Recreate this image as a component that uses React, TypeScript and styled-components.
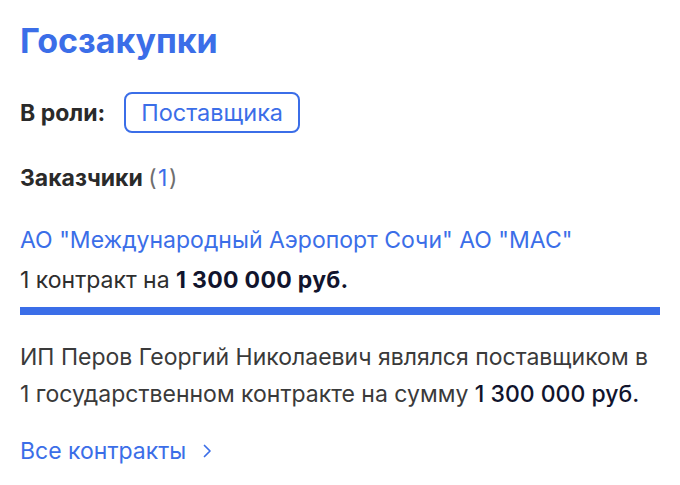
import React from "react";
import styled, { createGlobalStyle } from "styled-components";

const Global = createGlobalStyle`
  html, body { margin: 0; padding: 0; background: #ffffff; }
  body { font-family: Inter, "Noto Sans", sans-serif; -webkit-font-smoothing: antialiased; }
`;

const BLUE = "#3b6ee8";

const Page = styled.div`
  width: 680px;
  height: 485px;
  box-sizing: border-box;
  padding: 19px 20px 0 20px;
  display: flex;
  flex-direction: column;
  color: #2a2a2a;
`;

const Title = styled.h1`
  margin: 0;
  font-size: 34px;
  line-height: 44px;
  font-weight: 700;
  color: ${BLUE};
`;

const RoleRow = styled.div`
  margin-top: 29px;
  display: flex;
  align-items: center;
  gap: 19px;
`;

const Label = styled.span`
  font-size: 23px;
  font-weight: 700;
  color: #2a2a2a;
`;

const RoleButton = styled.button`
  box-sizing: border-box;
  height: 41px;
  padding: 0 15px;
  border: 2px solid ${BLUE};
  border-radius: 8px;
  background: #fff;
  color: ${BLUE};
  font-family: inherit;
  font-size: 23.5px;
  font-weight: 400;
`;

const SectionHead = styled.div`
  margin-top: 30px;
  font-size: 23px;
  font-weight: 700;
  line-height: 30px;
`;

const Count = styled.span`
  font-weight: 400;
  color: #6f6f6f;
  letter-spacing: 1.5px;
  span { color: ${BLUE}; }
`;

const CustomerLink = styled.a`
  margin-top: 32px;
  font-size: 23px;
  line-height: 30px;
  color: ${BLUE};
  text-decoration: none;
`;

const ContractLine = styled.div`
  margin-top: 10px;
  font-size: 23px;
  line-height: 30px;
  color: #2e2e2e;
`;

const Strong = styled.b`
  font-weight: 700;
  color: #11142d;
  letter-spacing: 0.3px;
`;

const Amount = styled.span`
  color: #11142d;
  font-weight: 500;
`;

const Bar = styled.div`
  margin-top: 12px;
  height: 8px;
  width: 640px;
  background: ${BLUE};
`;

const Paragraph = styled.p`
  margin: 24px 0 0 0;
  font-size: 23px;
  line-height: 37px;
  color: #3a3a3a;
`;

const MoreLink = styled.a`
  margin-top: 23px;
  display: flex;
  align-items: center;
  gap: 16px;
  font-size: 23px;
  line-height: 30px;
  color: ${BLUE};
  text-decoration: none;
`;

export default function App() {
  return (
    <>
      <Global />
      <Page>
        <Title>Госзакупки</Title>
        <RoleRow>
          <Label>В роли:</Label>
          <RoleButton>Поставщика</RoleButton>
        </RoleRow>
        <SectionHead>
          Заказчики <Count>(<span>1</span>)</Count>
        </SectionHead>
        <CustomerLink>АО "Международный Аэропорт Сочи" АО "МАС"</CustomerLink>
        <ContractLine>
          1 контракт на <Strong>1 300 000 руб.</Strong>
        </ContractLine>
        <Bar />
        <Paragraph>
          ИП Перов Георгий Николаевич являлся поставщиком в 1 государственном контракте на сумму{" "}
          <Amount>1 300 000 руб.</Amount>
        </Paragraph>
        <MoreLink>
          Все контракты
          <svg width="10" height="16" viewBox="0 0 10 16" fill="none">
            <path d="M2.5 2.5l5.5 5.5-5.5 5.5" stroke={BLUE} strokeWidth="1.7" strokeLinecap="round" strokeLinejoin="round" />
          </svg>
        </MoreLink>
      </Page>
    </>
  );
}
